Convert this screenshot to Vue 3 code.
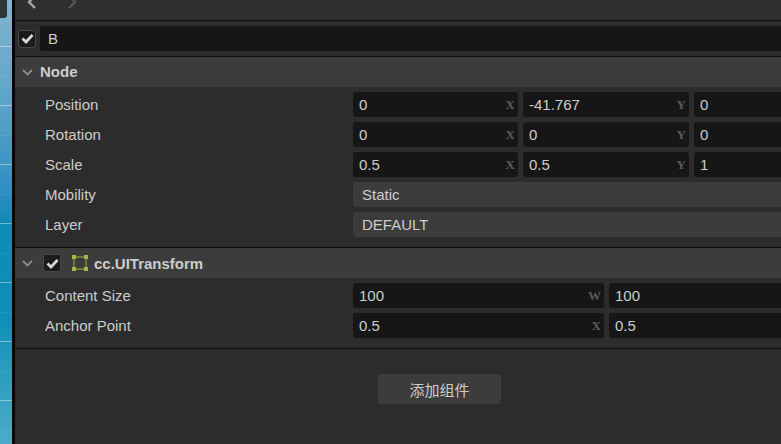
<template>
  <div class="page">
    <div class="scene">
      <div class="handle"></div>
    </div>
    <div class="inspector">
      <div class="toolbar">
        <svg width="50" height="12" viewBox="0 0 50 12" class="nav">
          <path d="M8 -4 L2 2 L8 8" stroke="#a8a8a8" />
          <path d="M42 -4 L48 2 L42 8" stroke="#555" />
        </svg>
      </div>
      <div class="name-row">
        <span class="check">
          <svg width="13" height="11" viewBox="0 0 13 11"><path d="M1.5 5.5 L5 9 L11.5 2" /></svg>
        </span>
        <div class="name-input">B</div>
      </div>
      <div class="section-head node">
        <svg class="arrow" width="11" height="7" viewBox="0 0 11 7"><path d="M1 1 L5.5 5.5 L10 1" /></svg>
        <span class="title">Node</span>
      </div>
      <div class="section-body">
        <div v-for="row in nodeRows" :key="row.label" class="row">
          <label>{{ row.label }}</label>
          <div v-if="row.values" class="fields three">
            <div v-for="(f, i) in row.values" :key="i" class="num">
              <span>{{ f }}</span><em v-if="axes[i]">{{ axes[i] }}</em>
            </div>
          </div>
          <div v-else class="select">{{ row.select }}</div>
        </div>
      </div>
      <div class="section-head comp">
        <svg class="arrow" width="11" height="7" viewBox="0 0 11 7"><path d="M1 1 L5.5 5.5 L10 1" /></svg>
        <span class="check">
          <svg width="13" height="11" viewBox="0 0 13 11"><path d="M1.5 5.5 L5 9 L11.5 2" /></svg>
        </span>
        <svg class="rect-icon" width="16" height="16" viewBox="0 0 16 16">
          <rect x="2" y="2" width="12" height="12" fill="none" stroke="#7f8a36" stroke-width="1.5" />
          <rect x="0" y="0" width="4" height="4" fill="#a9b546" />
          <rect x="12" y="0" width="4" height="4" fill="#a9b546" />
          <rect x="0" y="12" width="4" height="4" fill="#a9b546" />
          <rect x="12" y="12" width="4" height="4" fill="#a9b546" />
        </svg>
        <span class="title">cc.UITransform</span>
      </div>
      <div class="section-body">
        <div v-for="row in transformRows" :key="row.label" class="row">
          <label>{{ row.label }}</label>
          <div class="fields two">
            <div v-for="(f, i) in row.values" :key="i" class="num">
              <span>{{ f }}</span><em v-if="row.axes[i]">{{ row.axes[i] }}</em>
            </div>
          </div>
        </div>
      </div>
      <div class="add-wrap">
        <button class="add-btn">添加组件</button>
      </div>
    </div>
  </div>
</template>

<script setup>
// the third axis letter sits past the window edge in the screenshot
const axes = ['X', 'Y', '']

const nodeRows = [
  { label: 'Position', values: ['0', '-41.767', '0'] },
  { label: 'Rotation', values: ['0', '0', '0'] },
  { label: 'Scale', values: ['0.5', '0.5', '1'] },
  { label: 'Mobility', select: 'Static' },
  { label: 'Layer', select: 'DEFAULT' }
]

const transformRows = [
  { label: 'Content Size', values: ['100', '100'], axes: ['W', ''] },
  { label: 'Anchor Point', values: ['0.5', '0.5'], axes: ['X', ''] }
]
</script>

<style>
html, body {
  margin: 0;
  overflow: hidden;
  background: #2c2c2c;
}
</style>

<style scoped>
.page {
  display: flex;
  width: 781px;
  height: 444px;
  overflow: hidden;
  font-family: "Liberation Sans", "Noto Sans CJK SC", sans-serif;
  font-size: 15px;
  color: #cdcdcd;
}
.scene {
  position: relative;
  flex: none;
  width: 12px;
  height: 100%;
  border-right: 3px solid #050505;
  background:
    linear-gradient(rgba(255, 255, 255, 0.4) 1px, transparent 1px) 0 46px / 100% 59px,
    linear-gradient(rgba(255, 255, 255, 0.08) 1px, transparent 1px) 0 17px / 100% 59px,
    linear-gradient(#82b4cc 0, #5ea5c6 100px, #2f8fc4 190px, #0d8ab5 225px, #108eb8 320px, #2a9dbf 370px, #4aabc8 444px);
}
.handle {
  position: absolute;
  left: 0;
  top: 0;
  width: 7px;
  height: 18px;
  background: #2e363b;
  border-radius: 0 0 3px 0;
}
.inspector {
  flex: none;
  width: 766px;
  display: flex;
  flex-direction: column;
  background: #2c2c2c;
}
.toolbar {
  height: 20px;
  background: #2f2f2f;
  border-bottom: 1px solid #0e0e0e;
}
.nav {
  display: block;
  margin-left: 12px;
  fill: none;
  stroke-width: 2.4;
}
.name-row {
  display: flex;
  align-items: center;
  gap: 4px;
  height: 35px;
  padding-left: 3px;
  border-bottom: 1px solid #0e0e0e;
}
.check {
  flex: none;
  display: flex;
  align-items: center;
  justify-content: center;
  width: 16px;
  height: 16px;
  background: #1b1b1b;
  border: 1px solid #484848;
  border-radius: 3px;
}
.check path {
  fill: none;
  stroke: #d8d8d8;
  stroke-width: 2.8;
}
.name-input {
  flex: 1;
  height: 25px;
  line-height: 25px;
  padding-left: 8px;
  background: #161616;
  border-radius: 3px 0 0 3px;
}
.section-head {
  display: flex;
  align-items: center;
  height: 30px;
  padding-left: 7px;
  background: #3c3c3c;
}
.arrow {
  flex: none;
  margin-right: 7px;
}
.arrow path {
  fill: none;
  stroke: #8c8c8c;
  stroke-width: 1.8;
}
.title {
  font-weight: 700;
  color: #cdcdcd;
}
.node .title {
  margin-top: -2px;
}
.comp .arrow {
  margin-right: 10px;
}
.comp .check {
  margin-right: 11px;
}
.rect-icon {
  flex: none;
  margin-right: 6px;
}
.section-body {
  padding: 3px 0 7px;
  border-bottom: 1px solid #0e0e0e;
}
.row {
  display: flex;
  align-items: flex-start;
  box-sizing: border-box;
  height: 30px;
  padding-top: 2px;
}
.row label {
  flex: none;
  width: 338px;
  padding-left: 30px;
  box-sizing: border-box;
  line-height: 26px;
}
.fields {
  flex: 1;
  display: grid;
  gap: 5px;
}
.fields.three {
  grid-template-columns: 165px 166px 1fr;
}
.fields.two {
  grid-template-columns: 251px 1fr;
}
.num {
  display: flex;
  align-items: center;
  justify-content: space-between;
  height: 25px;
  padding: 0 3px 0 6px;
  background: #161616;
  border-radius: 3px;
}
.num:last-child {
  border-radius: 3px 0 0 3px;
}
.num em {
  font-family: "Liberation Serif", serif;
  font-style: normal;
  font-weight: 700;
  font-size: 13px;
  color: #5c5c5c;
}
.select {
  flex: 1;
  height: 25px;
  line-height: 25px;
  padding-left: 9px;
  background: #3c3c3c;
  border-radius: 3px 0 0 3px;
}
.add-wrap {
  display: flex;
  padding: 25px 0 0 363px;
}
.add-btn {
  width: 123px;
  height: 30px;
  padding: 0;
  border: 0;
  border-radius: 3px;
  background: #3c3c3c;
  color: #cdcdcd;
  font: inherit;
}
</style>
